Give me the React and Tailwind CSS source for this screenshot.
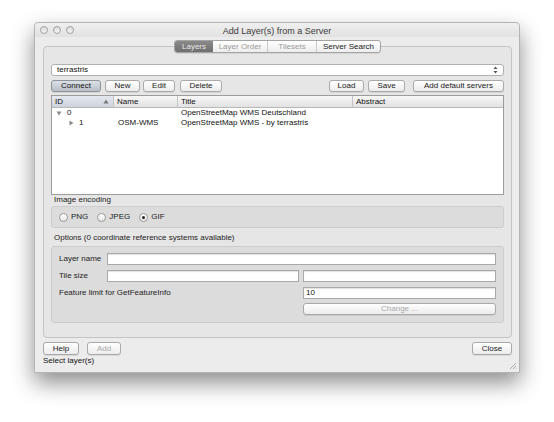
import React from "react";

const font = { fontFamily: '"Liberation Sans", Arial, sans-serif' };

function Btn({ children, className = "", disabled = false, pressed = false }) {
  return (
    <div
      className={
        "flex h-[12px] items-center justify-center rounded-[3px] border text-[8px] leading-none shadow-[0_1px_0_rgba(0,0,0,0.08)] " +
        (pressed
          ? "border-[#8e939b] bg-gradient-to-b from-[#dde1e7] to-[#b9bec7] text-[#111] "
          : "border-[#a9a9a9] bg-gradient-to-b from-[#ffffff] to-[#ececec] ") +
        (disabled ? "text-[#a8a8a8] " : "text-[#1a1a1a] ") +
        className
      }
    >
      {children}
    </div>
  );
}

function Radio({ label, checked = false }) {
  return (
    <div className="flex items-center gap-[3px]">
      <div className="flex h-[9px] w-[9px] items-center justify-center rounded-full border border-[#9a9a9a] bg-gradient-to-b from-white to-[#e6e6e6]">
        {checked && <div className="h-[3px] w-[3px] rounded-full bg-[#222]" />}
      </div>
      <span className="text-[8px] text-[#222]">{label}</span>
    </div>
  );
}

function Field({ className = "", children }) {
  return (
    <div
      className={
        "flex h-[12px] items-center border border-[#a9a9a9] bg-white pl-[2px] text-[8px] text-[#111] shadow-[inset_0_1px_1px_rgba(0,0,0,0.12)] " +
        className
      }
    >
      {children}
    </div>
  );
}

export default function App() {
  return (
    <div className="h-[422px] w-[554px] overflow-hidden bg-white pl-[34px] pt-[22px]" style={font}>
      <div className="relative flex h-[351px] w-[486px] flex-col rounded-t-[4px] border border-[#b4b4b4] bg-[#ececec] shadow-[0_10px_22px_rgba(0,0,0,0.45)]">
        {/* title bar */}
        <div className="relative flex h-[14px] items-center rounded-t-[4px] bg-gradient-to-b from-[#efefef] to-[#e2e2e2] px-[5px]">
          <div className="flex gap-[5px]">
            <div className="h-[8px] w-[8px] rounded-full border border-[#a2a2a2] bg-gradient-to-b from-[#dcdcdc] to-[#f4f4f4]" />
            <div className="h-[8px] w-[8px] rounded-full border border-[#a2a2a2] bg-gradient-to-b from-[#dcdcdc] to-[#f4f4f4]" />
            <div className="h-[8px] w-[8px] rounded-full border border-[#a2a2a2] bg-gradient-to-b from-[#dcdcdc] to-[#f4f4f4]" />
          </div>
          <div className="absolute inset-x-0 top-[2px] text-center text-[9px] text-[#3a3a3a]">Add Layer(s) from a Server</div>
        </div>

        <div className="flex flex-1 flex-col px-[8px] pt-[3px]">
          {/* tabs */}
          <div className="relative z-10 -mb-[7px] flex w-[469px] justify-center">
            <div className="flex h-[13px] overflow-hidden rounded-[3px] border border-[#a4a4a4] bg-gradient-to-b from-white to-[#ededed] text-[8px] shadow-[0_1px_0_rgba(0,0,0,0.08)]">
              <div className="flex w-[38px] items-center justify-center bg-gradient-to-b from-[#8a8a8a] to-[#6f6f6f] text-[#e8e8e8]">Layers</div>
              <div className="flex w-[55px] items-center justify-center border-r border-[#c8c8c8] text-[#9c9c9c]">Layer Order</div>
              <div className="flex w-[49px] items-center justify-center border-r border-[#c8c8c8] text-[#9c9c9c]">Tilesets</div>
              <div className="flex w-[63px] items-center justify-center text-[#1a1a1a]">Server Search</div>
            </div>
          </div>

          {/* pane */}
          <div className="flex h-[292px] w-[469px] flex-col rounded-[4px] border border-[#c4c4c4] bg-[#e6e6e6] px-[7px] pt-[17px]">
            <div className="flex h-[12px] items-center justify-between rounded-[3px] border border-[#b0b0b0] bg-white px-[5px] text-[8px] text-[#111]">
              <span>terrastris</span>
              <svg width="5" height="8" viewBox="0 0 5 8">
                <path d="M2.5 0.5 L4.5 3 H0.5 Z M2.5 7.5 L4.5 5 H0.5 Z" fill="#555" />
              </svg>
            </div>

            <div className="mt-[4px] flex items-center">
              <Btn pressed className="w-[50px]">Connect</Btn>
              <Btn className="ml-[4px] w-[35px]">New</Btn>
              <Btn className="ml-[3px] w-[32px]">Edit</Btn>
              <Btn className="ml-[5px] w-[42px]">Delete</Btn>
              <div className="flex-1" />
              <Btn className="w-[35px]">Load</Btn>
              <Btn className="ml-[4px] w-[37px]">Save</Btn>
              <Btn className="ml-[8px] w-[91px]">Add default servers</Btn>
            </div>

            {/* tree */}
            <div className="mt-[3px] flex h-[100px] flex-col border border-[#9c9c9c] bg-white text-[8px] text-[#111]">
              <div className="flex h-[12px] border-b border-[#b8b8b8] bg-gradient-to-b from-[#f7f7f7] to-[#e2e2e2]">
                <div className="flex w-[62px] items-center justify-between border-r border-[#c4c4c4] bg-gradient-to-b from-[#e4e8ee] to-[#cdd3dc] pl-[3px] pr-[4px]">
                  <span>ID</span>
                  <svg width="6" height="5" viewBox="0 0 6 5">
                    <path d="M3 0.5 L5.5 4.5 H0.5 Z" fill="#777" />
                  </svg>
                </div>
                <div className="flex w-[64px] items-center border-r border-[#c4c4c4] pl-[3px]">Name</div>
                <div className="flex w-[175px] items-center border-r border-[#c4c4c4] pl-[3px]">Title</div>
                <div className="flex flex-1 items-center pl-[3px]">Abstract</div>
              </div>
              <div className="flex h-[10px] items-center">
                <div className="flex w-[62px] items-center pl-[4px]">
                  <svg width="6" height="5" viewBox="0 0 6 5">
                    <path d="M0.5 0.5 H5.5 L3 4.5 Z" fill="#8a8a8a" />
                  </svg>
                  <span className="ml-[5px]">0</span>
                </div>
                <div className="w-[64px]" />
                <div className="pl-[3px]">OpenStreetMap WMS Deutschland</div>
              </div>
              <div className="flex h-[10px] items-center">
                <div className="flex w-[62px] items-center pl-[17px]">
                  <svg width="5" height="6" viewBox="0 0 5 6">
                    <path d="M0.5 0.5 L4.5 3 L0.5 5.5 Z" fill="#8a8a8a" />
                  </svg>
                  <span className="ml-[5px]">1</span>
                </div>
                <div className="w-[64px] pl-[4px]">OSM-WMS</div>
                <div className="pl-[3px]">OpenStreetMap WMS - by terrastris</div>
              </div>
            </div>

            <div className="pl-[3px] text-[8px] leading-[10px] text-[#222]">Image encoding</div>
            <div className="mt-[1px] flex h-[22px] items-center gap-[9px] rounded-[3px] border border-[#cdcdcd] bg-[#dcdcdc] pl-[7px]">
              <Radio label="PNG" />
              <Radio label="JPEG" />
              <Radio label="GIF" checked />
            </div>

            <div className="mt-[5px] pl-[3px] text-[8px] leading-[10px] text-[#222]">
              Options (0 coordinate reference systems available)
            </div>
            <div className="mt-[3px] h-[77px] rounded-[3px] border border-[#cdcdcd] bg-[#dcdcdc] px-[7px] pt-[6px]">
              <div className="grid grid-cols-[44px_192px_193px] gap-x-[4px] gap-y-[5px] text-[8px] text-[#222]">
                <div className="flex h-[12px] items-center">Layer name</div>
                <Field className="col-span-2" />
                <div className="flex h-[12px] items-center">Tile size</div>
                <Field />
                <Field />
                <div className="col-span-2 flex h-[12px] items-center">Feature limit for GetFeatureInfo</div>
                <Field>10</Field>
                <div className="col-start-3 -mt-[1px]">
                  <Btn disabled className="w-full">Change ...</Btn>
                </div>
              </div>
            </div>
          </div>

          {/* bottom buttons */}
          <div className="mt-[4px] flex items-center">
            <Btn className="h-[13px] w-[36px]">Help</Btn>
            <Btn disabled className="ml-[8px] h-[13px] w-[34px]">Add</Btn>
            <div className="flex-1" />
            <Btn className="mr-[-1px] h-[13px] w-[40px]">Close</Btn>
          </div>
        </div>
        <div className="px-[8px] pb-[6px] text-[8px] leading-[10px] text-[#111]">Select layer(s)</div>
        <svg className="absolute bottom-[2px] right-[2px]" width="8" height="8" viewBox="0 0 8 8">
          <path d="M7 1 L1 7 M7 4 L4 7 M7 6.5 L6.5 7" stroke="#9a9a9a" strokeWidth="0.8" />
        </svg>
      </div>
    </div>
  );
}
